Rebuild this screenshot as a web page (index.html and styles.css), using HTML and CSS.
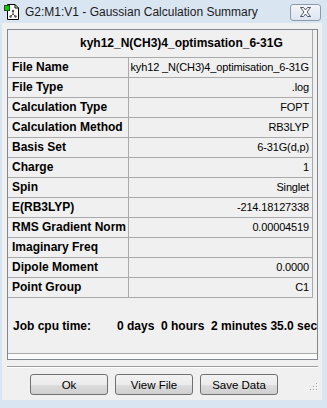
FILE: index.html
```html
<!DOCTYPE html>
<html lang="en">
<head>
  <meta charset="UTF-8">
  <meta name="viewport" content="width=device-width, initial-scale=1.0">
  <title>Gaussian Calculation Summary</title>
  <link rel="stylesheet" href="styles.css">
</head>
<body>
  <div class="window">
    <!-- Barra del titolo -->
    <div class="titlebar">
      <svg class="app-icon" width="16" height="16" viewBox="0 0 16 16">
        <path d="M3.5 0.5 H11 L14.5 4 V15.5 H3.5 Z" fill="#fff" stroke="#000"/>
        <path d="M11 0.5 V4 H14.5" fill="none" stroke="#000"/>
        <rect x="0.5" y="1.5" width="5" height="5" fill="#19c419" stroke="#0a5a0a"/>
        <path d="M9 7 V10 M9 10 L6.5 12.5 M9 10 L11.5 12.5" stroke="#555" stroke-width="1"/>
        <circle cx="9" cy="7" r="1.2" fill="#555"/>
        <circle cx="6.5" cy="12.5" r="1.2" fill="#555"/>
        <circle cx="11.5" cy="12.5" r="1.2" fill="#555"/>
      </svg>
      <span class="title">G2:M1:V1 - Gaussian Calculation Summary</span>
      <div class="close-btn">
        <svg width="13" height="10" viewBox="0 0 13 10">
          <path d="M1.5 0.5 H4.5 L6.5 3 L8.5 0.5 H11.5 L8 5 L11.5 9.5 H8.5 L6.5 7 L4.5 9.5 H1.5 L5 5 Z" fill="#fff" stroke="#4d5566" stroke-linejoin="round"/>
        </svg>
      </div>
    </div>

    <!-- Area client -->
    <div class="client">
      <div class="summary">
        <div class="grid">
          <div class="caption">kyh12_N(CH3)4_optimsation_6-31G</div>
          <div class="label">File Name</div><div class="value">kyh12 _N(CH3)4_optimisation_6-31G</div>
          <div class="label">File Type</div><div class="value">.log</div>
          <div class="label">Calculation Type</div><div class="value">FOPT</div>
          <div class="label">Calculation Method</div><div class="value">RB3LYP</div>
          <div class="label">Basis Set</div><div class="value">6-31G(d,p)</div>
          <div class="label">Charge</div><div class="value">1</div>
          <div class="label">Spin</div><div class="value">Singlet</div>
          <div class="label">E(RB3LYP)</div><div class="value">-214.18127338</div>
          <div class="label">RMS Gradient Norm</div><div class="value">0.00004519</div>
          <div class="label">Imaginary Freq</div><div class="value"></div>
          <div class="label">Dipole Moment</div><div class="value">0.0000</div>
          <div class="label">Point Group</div><div class="value">C1</div>
        </div>
        <div class="cpu-time">
          <span class="cpu-label">Job cpu time:</span><span class="cpu-value">0 days  0 hours  2 minutes 35.0 sec</span>
        </div>
        <div class="bottom-strip"></div>
      </div>

      <!-- Separatore -->
      <div class="separator"></div>

      <div class="buttons">
        <button class="btn">Ok</button>
        <button class="btn">View File</button>
        <button class="btn">Save Data</button>
      </div>

      <svg class="grip" width="10" height="10" viewBox="0 0 10 10">
        <rect x="8" y="0" width="1" height="1" fill="#a0a0a0"/>
        <rect x="5" y="3" width="1" height="1" fill="#a0a0a0"/>
        <rect x="8" y="3" width="1" height="1" fill="#a0a0a0"/>
        <rect x="2" y="6" width="1" height="1" fill="#a0a0a0"/>
        <rect x="5" y="6" width="1" height="1" fill="#a0a0a0"/>
        <rect x="8" y="6" width="1" height="1" fill="#a0a0a0"/>
        <rect x="9" y="1" width="1" height="1" fill="#fff"/>
        <rect x="6" y="4" width="1" height="1" fill="#fff"/>
        <rect x="9" y="4" width="1" height="1" fill="#fff"/>
        <rect x="3" y="7" width="1" height="1" fill="#fff"/>
        <rect x="6" y="7" width="1" height="1" fill="#fff"/>
        <rect x="9" y="7" width="1" height="1" fill="#fff"/>
      </svg>
    </div>
  </div>
</body>
</html>
```

FILE: styles.css
```css
body {
  margin: 0;
  padding: 0;
  font-family: "Liberation Sans", Arial, sans-serif;
  color: #000;
}
.window {
  width: 327px;
  height: 408px;
  background-color: #dae5f2;
  display: flex;
  flex-direction: column;
}
.titlebar {
  height: 23px;
  display: flex;
  align-items: center;
  padding-left: 4px;
  box-sizing: border-box;
}
.app-icon {
  flex: none;
  margin-top: 1px;
}
.title {
  margin-left: 5px;
  font-family: "Liberation Sans", Arial, sans-serif;
  font-size: 12px;
  color: #1b1b1b;
  white-space: nowrap;
}
.close-btn {
  margin-left: auto;
  margin-right: 6px;
  width: 31px;
  height: 17px;
  box-sizing: border-box;
  border: 1px solid #8d99ad;
  border-radius: 3px;
  background: linear-gradient(#f2f5fa, #dde5ef);
  display: flex;
  align-items: center;
  justify-content: center;
  margin-top: 1px;
}
.client {
  position: relative;
  margin: 0 5px 0 2px;
  height: 377px;
  background-color: #f0f0f0;
  padding: 6px 4px 0 5px;
  box-sizing: border-box;
}
/* Riquadro con la tabella dei risultati */
.summary {
  width: 311px;
  height: 331px;
  box-sizing: border-box;
  border: 1px solid #828790;
  overflow: hidden;
  display: flex;
  flex-direction: column;
}
.grid {
  display: grid;
  grid-template-columns: 121px 184px;
  grid-template-rows: 28px;
  grid-auto-rows: 20px;
}
.grid > div {
  box-sizing: border-box;
  border-right: 1px solid #aaaaaa;
  border-bottom: 1px solid #aaaaaa;
  white-space: nowrap;
  overflow: hidden;
}
.grid > .caption {
  grid-column: 1 / 3;
  line-height: 27px;
  padding-left: 72px;
  font-weight: bold;
  font-size: 12px;
}
.label {
  font-weight: bold;
  font-size: 12px;
  line-height: 19px;
  padding-left: 4px;
}
.value {
  font-size: 11px;
  letter-spacing: -0.15px;
  line-height: 19px;
  text-align: right;
  padding-right: 3px;
}
.cpu-time {
  height: 55px;
  flex: none;
  display: flex;
  align-items: center;
  padding-left: 5px;
  font-weight: bold;
  font-size: 12px;
  white-space: pre;
}
.cpu-label {
  width: 104px;
  flex: none;
}
.bottom-strip {
  height: 6px;
  flex: none;
  box-sizing: border-box;
  border-top: 1px solid #aaaaaa;
  background-color: #fafafa;
}
.separator {
  width: 311px;
  margin: 6px 0;
  border-top: 1px solid #a0a0a0;
  border-bottom: 1px solid #fff;
}
.buttons {
  display: flex;
  gap: 7px;
  padding-left: 23px;
}
.btn {
  width: 78px;
  height: 21px;
  padding: 0;
  border: 1px solid #707070;
  border-radius: 3px;
  background: linear-gradient(#f2f2f2 0%, #ebebeb 50%, #dddddd 50%, #cfcfcf 100%);
  font-family: "Liberation Sans", Arial, sans-serif;
  font-size: 11.5px;
  color: #000;
}
.grip {
  position: absolute;
  right: 4px;
  bottom: 7px;
}
```
